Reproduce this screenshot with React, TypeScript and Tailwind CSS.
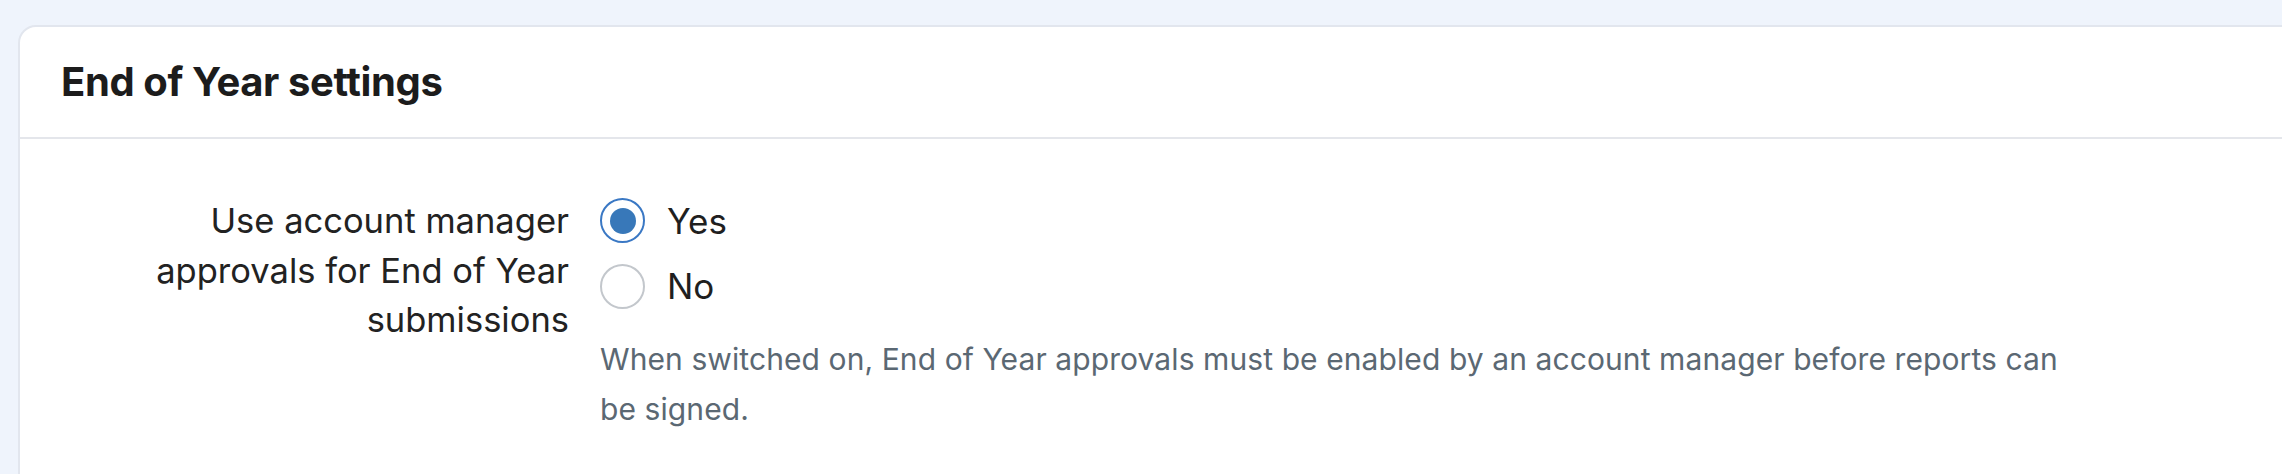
import React from "react";

export default function App() {
  return (
    <div
      className="h-[474px] w-full overflow-hidden bg-[#eff4fc] pl-[18px] pt-[25px]"
      style={{ fontFamily: "Inter, 'Noto Sans', sans-serif" }}
    >
      <div className="mr-[-40px] h-[600px] rounded-tl-[18px] border-2 border-[#e2e6ee] bg-white">
        <div className="flex h-[112px] items-center border-b-2 border-[#e4e6eb] pl-[41px]">
          <h2 className="text-[40px] font-bold leading-none tracking-[-0.01em] text-[#1c1c1c]">
            End of Year settings
          </h2>
        </div>
        <div className="flex pt-[57px]">
          <div className="w-[580px] shrink-0 pr-[31px] text-right text-[34.5px] leading-[49.5px] text-[#222222]">
            Use account manager
            <br />
            approvals for End of Year
            <br />
            submissions
          </div>
          <div className="flex flex-col">
            <label className="flex h-[49.5px] items-center gap-[22px] text-[35px] text-[#1f1f1f]">
              <span className="flex h-[45px] w-[45px] items-center justify-center rounded-full border-2 border-[#3a78c4]">
                <span className="h-[26px] w-[26px] rounded-full bg-[#3878b9]" />
              </span>
              Yes
            </label>
            <label className="mt-[16px] flex h-[49.5px] items-center gap-[22px] text-[35px] text-[#1f1f1f]">
              <span className="h-[45px] w-[45px] rounded-full border-2 border-[#c3c7cc]" />
              No
            </label>
            <p className="mt-[23px] w-[1480px] text-[30px] leading-[50px] tracking-[0.003em] text-[#5b6873]">
              When switched on, End of Year approvals must be enabled by an account manager before reports can be signed.
            </p>
          </div>
        </div>
      </div>
    </div>
  );
}
